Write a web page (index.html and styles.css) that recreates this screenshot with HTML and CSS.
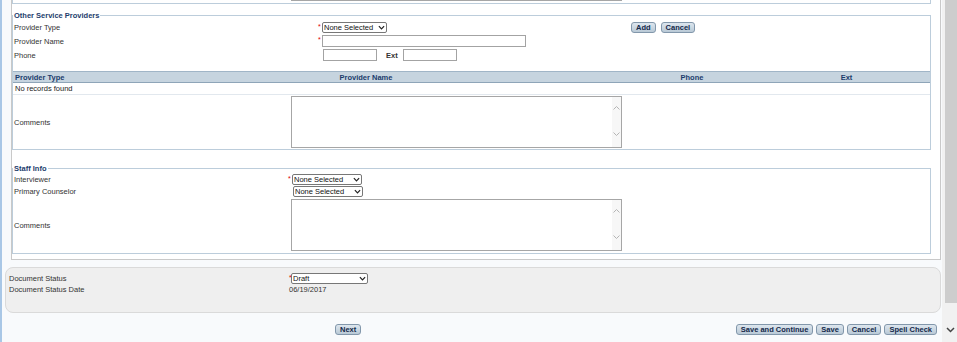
FILE: index.html
```html
<!DOCTYPE html>
<html lang="en">
<head>
  <meta charset="UTF-8">
  <title>Other Service Providers</title>
  <link rel="stylesheet" href="styles.css">
</head>
<body>
  <div class="app">
    <div class="main">
      <div class="panel">
        <div class="prev-end"><div class="prev-box"></div></div>

        <fieldset class="group">
          <legend>Other Service Providers</legend>
          <div class="prov-row">
            <label>Provider Type</label>
            <div class="field">
              <span class="req">*</span>
              <span class="select w-type"><select><option>None Selected</option></select><svg class="caret" viewBox="0 0 8 5"><path d="M1 1l3 3 3-3"/></svg></span>
            </div>
            <div class="actions"><button class="btn">Add</button><button class="btn">Cancel</button></div>
          </div>
          <div class="prov-row">
            <label>Provider Name</label>
            <div class="field"><span class="req">*</span><input class="txt w-name" type="text"></div>
          </div>
          <div class="prov-row">
            <label>Phone</label>
            <div class="field">
              <span class="req"></span><input class="txt w-phone" type="text">
              <b class="ext">Ext</b><input class="txt w-ext" type="text">
            </div>
          </div>

          <table class="grid">
            <colgroup><col class="c1"><col class="c2"><col class="c3"><col class="c4"></colgroup>
            <thead>
              <tr><th class="left">Provider Type</th><th>Provider Name</th><th>Phone</th><th>Ext</th></tr>
            </thead>
            <tbody>
              <tr><td colspan="4">No records found</td></tr>
            </tbody>
          </table>

          <div class="comment-row">
            <label>Comments</label>
            <div class="textbox">
              <div class="vscroll">
                <svg viewBox="0 0 7 4"><path d="M0.5 3.5l3-3 3 3"/></svg>
                <svg viewBox="0 0 7 4"><path d="M0.5 0.5l3 3 3-3"/></svg>
              </div>
            </div>
          </div>
        </fieldset>

        <fieldset class="group staff">
          <legend>Staff Info</legend>
          <div class="staff-row first">
            <label>Interviewer</label>
            <div class="field">
              <span class="req">*</span>
              <span class="select w-staff"><select><option>None Selected</option></select><svg class="caret" viewBox="0 0 8 5"><path d="M1 1l3 3 3-3"/></svg></span>
            </div>
          </div>
          <div class="staff-row">
            <label>Primary Counselor</label>
            <div class="field">
              <span class="req"></span>
              <span class="select w-staff nudge"><select><option>None Selected</option></select><svg class="caret" viewBox="0 0 8 5"><path d="M1 1l3 3 3-3"/></svg></span>
            </div>
          </div>
          <div class="comment-row">
            <label>Comments</label>
            <div class="textbox">
              <div class="vscroll">
                <svg viewBox="0 0 7 4"><path d="M0.5 3.5l3-3 3 3"/></svg>
                <svg viewBox="0 0 7 4"><path d="M0.5 0.5l3 3 3-3"/></svg>
              </div>
            </div>
          </div>
        </fieldset>
      </div>

      <div class="status">
        <div class="status-row">
          <label>Document Status</label>
          <div class="field">
            <span class="req small">*</span>
            <span class="select w-status"><select><option>Draft</option></select><svg class="caret" viewBox="0 0 8 5"><path d="M1 1l3 3 3-3"/></svg></span>
          </div>
        </div>
        <div class="status-row">
          <label>Document Status Date</label>
          <div class="value">06/19/2017</div>
        </div>
      </div>

      <div class="footer">
        <button class="btn next">Next</button>
        <div class="footer-right">
          <button class="btn">Save and Continue</button>
          <button class="btn">Save</button>
          <button class="btn">Cancel</button>
          <button class="btn">Spell Check</button>
        </div>
      </div>
    </div>

    <div class="scrollbar">
      <div class="thumb"></div>
      <svg class="down" viewBox="0 0 9 6"><path d="M1 1l3.5 3.5 3.5-3.5"/></svg>
    </div>
  </div>
</body>
</html>
```

FILE: styles.css
```css
body {
  margin: 0;
  background: #f8fafc;
  font-family: "Liberation Sans", Arial, sans-serif;
  font-size: 7.5px;
  color: #333;
}
.app { display: flex; height: 342px; overflow: hidden; }
.main {
  width: 940px;
  border-left: 2px solid #a9c7e6;
}

/* white form panel */
.panel {
  box-sizing: border-box;
  width: 930px;
  margin-left: 9px;
  background: #fff;
  border: 1px solid #c9c9c9;
  border-top: none;
  padding: 0 9px 5px 0;
}
.prev-end {
  height: 3px;
  border: 1px solid #bccddb;
  border-top: none;
}
.prev-box {
  margin-left: 278px;
  width: 331px;
  height: 1px;
  border: 1px solid #a6a6a6;
  border-top: none;
  box-sizing: border-box;
}

.group {
  margin: 7px 0 0 0;
  padding: 0;
  border: 1px solid #bccddb;
  min-width: 0;
}
.group legend {
  padding: 0 1px;
  font-weight: bold;
  color: #1c3c6c;
  line-height: 9px;
}
.group.staff { margin-top: 14px; padding-bottom: 1px; }

label { padding-left: 1px; color: #333; }

.prov-row {
  display: grid;
  grid-template-columns: 305px 313px auto;
  height: 14px;
  align-items: center;
}
.staff-row {
  display: grid;
  grid-template-columns: 275px auto;
  height: 13px;
  align-items: center;
}
.staff-row.first { height: 12px; }

.field { display: flex; align-items: center; }
.req {
  width: 4px;
  color: #d00;
  font-size: 7px;
  line-height: 7px;
  align-self: flex-start;
  margin-top: 1px;
}
.req.small { width: 2px; }

.select { position: relative; display: inline-block; }
.select select {
  appearance: none;
  box-sizing: border-box;
  width: 100%;
  height: 11px;
  border: 1px solid #777;
  border-radius: 2px;
  background: #fff;
  font: inherit;
  color: #111;
  line-height: 9px;
  padding: 0 10px 0 1px;
}
.select .caret {
  position: absolute;
  right: 2px;
  top: 3px;
  width: 7px;
  height: 5px;
  fill: none;
  stroke: #222;
  stroke-width: 1.4;
}
.w-type { width: 65px; }
.w-staff { width: 70px; }
.w-status { width: 77px; }
.nudge { margin-left: 1px; }

.txt {
  box-sizing: border-box;
  height: 12px;
  border: 1px solid #a3a3a3;
  padding: 0;
  background: #fff;
}
.w-name { width: 204px; }
.w-phone { width: 54px; margin-left: 1px; }
.w-ext { width: 54px; margin-left: 5px; }
.ext { margin-left: 9px; color: #333; }

.actions { display: flex; gap: 5px; }

.btn {
  box-sizing: border-box;
  height: 11px;
  padding: 0 4px;
  border: 1px solid #8297ab;
  border-radius: 3px;
  background: linear-gradient(#dde6ee, #b9c9d6);
  color: #13284a;
  font-family: inherit;
  font-size: 7.5px;
  font-weight: bold;
  line-height: 9px;
}

/* list table */
.grid {
  width: 100%;
  margin-top: 9px;
  border-collapse: collapse;
  table-layout: fixed;
}
.grid .c1 { width: 98px; }
.grid .c2 { width: 510px; }
.grid .c3 { width: 142px; }
.grid th {
  height: 10px;
  padding: 0 2px;
  background: #c6d4df;
  border-top: 1px solid #a0b5c7;
  border-bottom: 1px solid #8ea5b8;
  color: #1c3c6c;
  font-weight: bold;
  text-align: center;
  line-height: 9px;
}
.grid th.left { text-align: left; }
.grid td {
  height: 11px;
  padding: 0 2px;
  line-height: 9px;
  color: #222;
  border-bottom: 1px solid #e2e8ee;
}

.comment-row {
  display: grid;
  grid-template-columns: 278px auto;
  align-items: center;
  padding: 1px 0;
}
.textbox {
  box-sizing: border-box;
  width: 331px;
  height: 52px;
  border: 1px solid #a6a6a6;
  background: #fff;
  display: flex;
  justify-content: flex-end;
}
.vscroll {
  width: 9px;
  background: #f7f7f7;
  display: flex;
  flex-direction: column;
  justify-content: space-between;
  align-items: center;
  padding: 9px 0 11px;
}
.vscroll svg {
  width: 7px;
  height: 4px;
  fill: none;
  stroke: #b5b5b5;
  stroke-width: 1;
}

/* document status box */
.status {
  box-sizing: border-box;
  width: 936px;
  height: 46px;
  margin: 7px 0 0 3px;
  padding: 4px 0 0 2px;
  background: #efefef;
  border: 1px solid #dadada;
  border-radius: 8px;
}
.status-row {
  display: grid;
  grid-template-columns: 281px auto;
  height: 12px;
  align-items: center;
}
.status-row + .status-row { height: 11px; }
.value { color: #333; }

.footer {
  display: flex;
  align-items: center;
  margin-top: 11px;
}
.footer .next { margin-left: 333px; }
.footer-right {
  display: flex;
  gap: 3px;
  margin-left: auto;
  margin-right: 5px;
}

/* page scrollbar */
.scrollbar {
  width: 15px;
  background: #f1f1f1;
  padding-left: 3px;
  box-sizing: border-box;
}
.thumb { height: 303px; background: #cdcdcd; }
.down {
  display: block;
  width: 9px;
  height: 6px;
  margin: 24px 0 0 1px;
  fill: none;
  stroke: #444;
  stroke-width: 1.5;
}
```
